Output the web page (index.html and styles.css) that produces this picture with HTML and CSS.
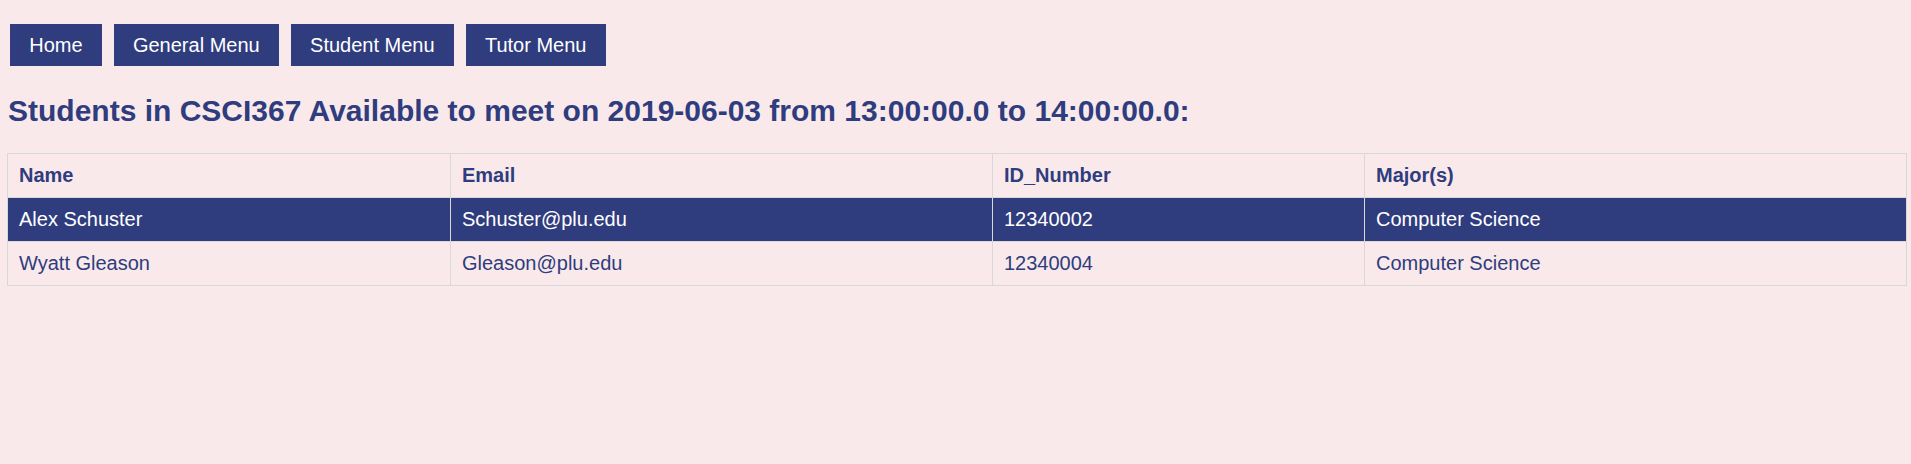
FILE: index.html
```html
<!DOCTYPE html>
<html lang="en">
<head>
<meta charset="utf-8">
<title>Students Available</title>
<link rel="stylesheet" href="styles.css">
</head>
<body>
<nav class="nav">
  <a class="nav-btn" href="#">Home</a>
  <a class="nav-btn" href="#">General Menu</a>
  <a class="nav-btn" href="#">Student Menu</a>
  <a class="nav-btn" href="#">Tutor Menu</a>
</nav>
<h2 class="title">Students in CSCI367 Available to meet on 2019-06-03 from 13:00:00.0 to 14:00:00.0:</h2>
<table class="students">
  <colgroup>
    <col class="c-name">
    <col class="c-email">
    <col class="c-id">
    <col class="c-major">
  </colgroup>
  <thead>
    <tr><th>Name</th><th>Email</th><th>ID_Number</th><th>Major(s)</th></tr>
  </thead>
  <tbody>
    <tr class="active"><td>Alex Schuster</td><td>Schuster@plu.edu</td><td>12340002</td><td>Computer Science</td></tr>
    <tr><td>Wyatt Gleason</td><td>Gleason@plu.edu</td><td>12340004</td><td>Computer Science</td></tr>
  </tbody>
</table>
</body>
</html>
```
FILE: styles.css
```css
html, body {
  background: #f9e9ea;
}
body {
  margin: 7px 4px 7px 7px;
  font-family: "Liberation Sans", Arial, sans-serif;
  color: #2f3c7e;
}
.nav {
  display: flex;
  gap: 12px;
  margin-top: 17px;
  padding-left: 3px;
}
.nav-btn {
  display: block;
  background: #2f3c7e;
  color: #ffffff;
  text-decoration: none;
  font-size: 20px;
  line-height: 22px;
  padding: 10px 19.2px;
}
.title {
  font-size: 30px;
  font-weight: bold;
  line-height: 34px;
  margin: 28px 0 25px 1px;
  color: #2f3c7e;
}
.students {
  width: 100%;
  border-collapse: collapse;
  table-layout: fixed;
  font-size: 20px;
  line-height: 23px;
}
.c-name { width: 443px; }
.c-email { width: 542px; }
.c-id { width: 372px; }
.c-major { width: auto; }
.students th,
.students td {
  border: 1px solid #d8d8d8;
  padding: 10px 11px;
  text-align: left;
  color: #2f3c7e;
}
.students th {
  font-weight: bold;
}
.students tr.active td {
  background: #2f3c7e;
  color: #ffffff;
}
```
